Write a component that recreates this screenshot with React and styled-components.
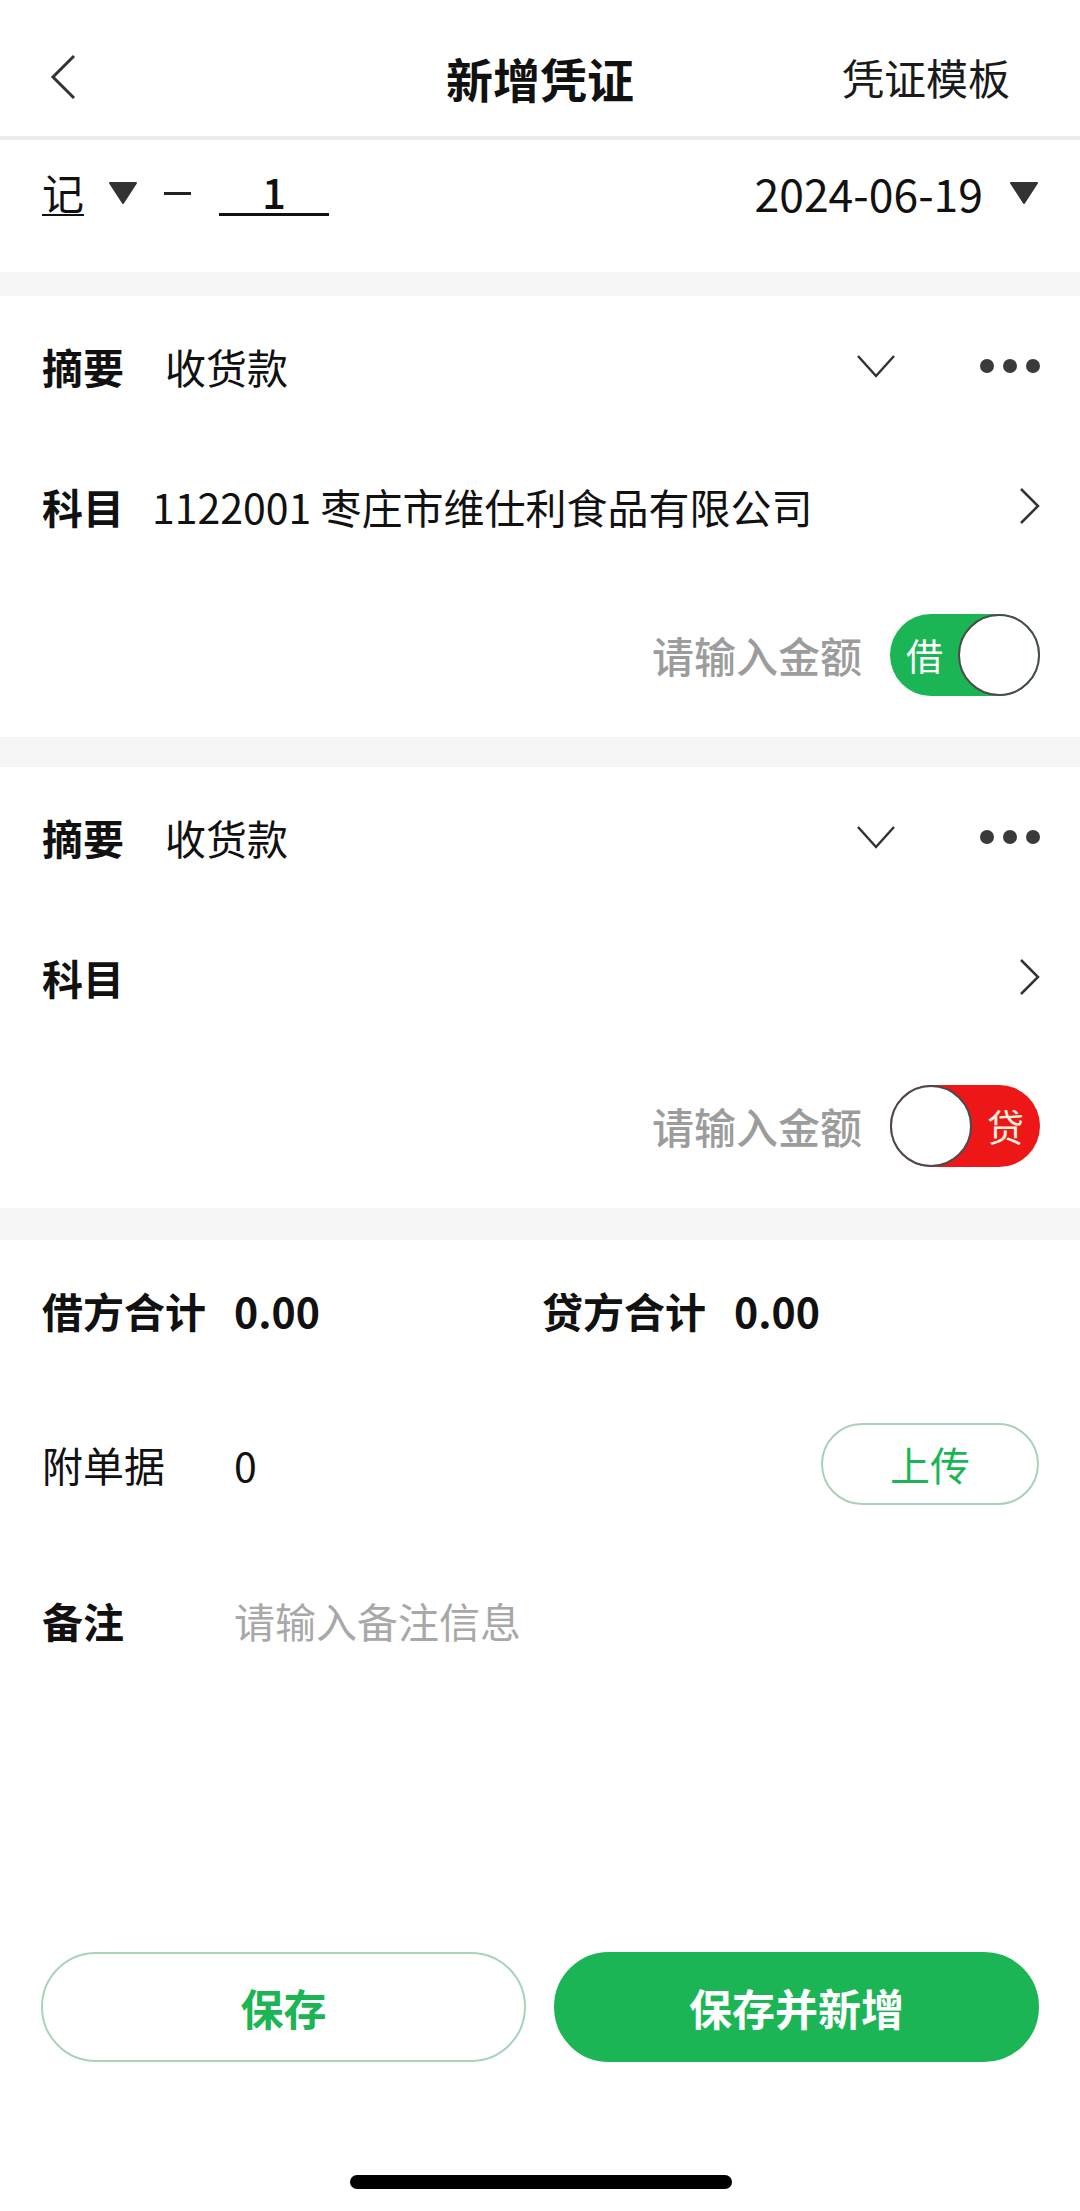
import React from 'react';
import styled, { createGlobalStyle } from 'styled-components';

const GlobalStyle = createGlobalStyle`
  html, body {
    margin: 0;
    padding: 0;
    background: #ffffff;
  }
  body {
    font-family: "Noto Sans CJK SC", "Noto Sans", sans-serif;
    color: #111111;
  }
  * {
    box-sizing: border-box;
  }
`;

const GREEN = '#1bb555';
const RED = '#ee1717';

const Page = styled.div`
  display: flex;
  flex-direction: column;
  width: 1080px;
  min-height: 100vh;
  background: #f5f5f5;
`;

const NavBar = styled.header`
  display: grid;
  grid-template-columns: 1fr auto 1fr;
  align-items: center;
  height: 140px;
  padding: 18px 0 0;
  background: #ffffff;
  border-bottom: 4px solid #ececec;
`;

const BackButton = styled.button`
  justify-self: start;
  display: flex;
  align-items: center;
  margin-left: 50px;
  padding: 0;
  border: none;
  background: none;
`;

const Title = styled.h1`
  margin: 0;
  font-size: 47px;
  font-weight: 700;
  line-height: 1;
  color: #111111;
`;

const NavAction = styled.span`
  justify-self: end;
  margin-right: 70px;
  font-size: 42px;
  line-height: 1;
  color: #1a1a1a;
`;

const VoucherBar = styled.div`
  display: flex;
  align-items: center;
  height: 132px;
  padding: 0 42px 26px;
  background: #ffffff;
`;

const Word = styled.span`
  display: inline-block;
  font-size: 42px;
  line-height: 1;
  padding-bottom: 1px;
  border-bottom: 2px solid #111111;
`;

const Dash = styled.span`
  width: 27px;
  height: 3px;
  margin: 0 28px 0 27px;
  background: #222222;
`;

const NumberField = styled.span`
  display: inline-block;
  width: 110px;
  text-align: center;
  font-size: 42px;
  font-weight: 500;
  line-height: 1;
  padding-bottom: 1px;
  border-bottom: 3px solid #111111;
`;

const DateText = styled.span`
  margin-left: auto;
  margin-right: 27px;
  font-size: 44.5px;
  line-height: 1;
  color: #111111;
`;

const Card = styled.section`
  margin-top: ${(p) => p.$gap}px;
  padding: 0 40px 0 42px;
  background: #ffffff;
`;

const FieldRow = styled.div`
  display: flex;
  align-items: center;
  height: 140px;
`;

const Label = styled.span`
  flex-shrink: 0;
  width: ${(p) => (p.$width ? `${p.$width}px` : 'auto')};
  font-size: 41px;
  font-weight: ${(p) => (p.$plain ? 400 : 700)};
  line-height: 1;
  color: #111111;
`;

const Value = styled.span`
  flex: 1;
  margin-left: ${(p) => p.$gap}px;
  font-size: ${(p) => p.$size || 41}px;
  line-height: 1;
  color: ${(p) => (p.$muted ? '#a8a8a8' : '#111111')};
  white-space: nowrap;
`;

const IconSlot = styled.span`
  display: flex;
  align-items: center;
  margin-left: ${(p) => p.$gap || 0}px;
`;

const Dots = styled.span`
  display: flex;
  gap: 9px;
  margin-left: 85px;
`;

const Dot = styled.span`
  width: 14px;
  height: 14px;
  border-radius: 50%;
  background: #3a3a3a;
`;

const AmountRow = styled.div`
  display: flex;
  align-items: center;
  justify-content: flex-end;
  gap: 28px;
  height: 161px;
  padding-bottom: 3px;
`;

const AmountHint = styled.span`
  font-size: 42px;
  font-weight: 500;
  line-height: 1;
  color: #9c9c9c;
`;

const Toggle = styled.div`
  position: relative;
  display: flex;
  align-items: center;
  justify-content: ${(p) => (p.$debit ? 'flex-start' : 'flex-end')};
  width: 150px;
  height: 82px;
  padding: 0 16px;
  border-radius: 41px;
  background: ${(p) => (p.$debit ? GREEN : RED)};
  color: ${(p) => (p.$debit ? '#ffffff' : '#fff3e0')};
  font-size: 37px;
  line-height: 1;
`;

const Knob = styled.span`
  position: absolute;
  top: 0;
  ${(p) => (p.$debit ? 'right: 0;' : 'left: 0;')}
  width: 82px;
  height: 82px;
  border-radius: 50%;
  background: #ffffff;
  border: 2px solid #4a4a4a;
`;

const Summary = styled.section`
  flex: 1;
  display: flex;
  flex-direction: column;
  margin-top: 32px;
  padding: 0 41px 0 42px;
  background: #ffffff;
`;

const TotalsRow = styled.div`
  display: grid;
  grid-template-columns: 500px 1fr;
  align-items: center;
  height: 146px;
  padding-bottom: 6px;
`;

const Total = styled.div`
  display: flex;
  align-items: center;
`;

const TotalAmount = styled.span`
  margin-left: 28px;
  font-size: 41px;
  font-weight: 700;
  line-height: 1;
`;

const InfoRow = styled.div`
  display: flex;
  align-items: center;
  height: 156px;
`;

const Count = styled.span`
  font-size: 41px;
  line-height: 1;
`;

const UploadButton = styled.button`
  margin-left: auto;
  width: 218px;
  height: 82px;
  border-radius: 41px;
  border: 2px solid #a8d2b6;
  background: #ffffff;
  color: ${GREEN};
  font-family: inherit;
  font-size: 40px;
  line-height: 1;
`;

const ButtonBar = styled.div`
  display: grid;
  grid-template-columns: 1fr 1fr;
  gap: 28px;
  margin-top: auto;
  margin-left: -1px;
`;

const ActionButton = styled.button`
  height: 110px;
  border-radius: 55px;
  border: 2px solid ${(p) => (p.$primary ? GREEN : '#a9d3b9')};
  background: ${(p) => (p.$primary ? GREEN : '#ffffff')};
  color: ${(p) => (p.$primary ? '#ffffff' : GREEN)};
  font-family: inherit;
  font-size: 43px;
  font-weight: 700;
  line-height: 1;
`;

const HomeIndicator = styled.div`
  align-self: center;
  width: 382px;
  height: 14px;
  margin: 113px 0 22px;
  border-radius: 7px;
  background: #000000;
`;

const BackIcon = () => (
  <svg width="26" height="46" viewBox="0 0 26 46">
    <polyline points="24,2 3,23 24,44" fill="none" stroke="#333" strokeWidth="3" />
  </svg>
);

const Caret = () => (
  <svg width="28" height="22" viewBox="0 0 28 22">
    <polygon points="1,1 27,1 14,21" fill="#333" stroke="#333" strokeWidth="2" strokeLinejoin="round" />
  </svg>
);

const ChevronDown = () => (
  <svg width="38" height="23" viewBox="0 0 38 23">
    <polyline points="1,1 19,21 37,1" fill="none" stroke="#333" strokeWidth="2.5" />
  </svg>
);

const ChevronRight = () => (
  <svg width="20" height="36" viewBox="0 0 20 36">
    <polyline points="1,1 18,18 1,35" fill="none" stroke="#333" strokeWidth="2.5" />
  </svg>
);

const entries = [
  { summary: '收货款', subject: '1122001 枣庄市维仕利食品有限公司', debit: true, gap: 24 },
  { summary: '收货款', subject: '', debit: false, gap: 30 },
];

function EntryCard({ summary, subject, debit, gap }) {
  return (
    <Card $gap={gap}>
      <FieldRow>
        <Label>摘要</Label>
        <Value $gap={41}>{summary}</Value>
        <IconSlot>
          <ChevronDown />
        </IconSlot>
        <Dots>
          <Dot />
          <Dot />
          <Dot />
        </Dots>
      </FieldRow>
      <FieldRow>
        <Label>科目</Label>
        <Value $gap={28}>{subject}</Value>
        <IconSlot>
          <ChevronRight />
        </IconSlot>
      </FieldRow>
      <AmountRow>
        <AmountHint>请输入金额</AmountHint>
        <Toggle $debit={debit}>
          {debit ? '借' : '贷'}
          <Knob $debit={debit} />
        </Toggle>
      </AmountRow>
    </Card>
  );
}

export default function App() {
  return (
    <>
      <GlobalStyle />
      <Page>
        <NavBar>
          <BackButton>
            <BackIcon />
          </BackButton>
          <Title>新增凭证</Title>
          <NavAction>凭证模板</NavAction>
        </NavBar>

        <VoucherBar>
          <Word>记</Word>
          <IconSlot $gap={25}>
            <Caret />
          </IconSlot>
          <Dash />
          <NumberField>1</NumberField>
          <DateText>2024-06-19</DateText>
          <Caret />
        </VoucherBar>

        {entries.map((e, i) => (
          <EntryCard key={i} {...e} />
        ))}

        <Summary>
          <TotalsRow>
            <Total>
              <Label>借方合计</Label>
              <TotalAmount>0.00</TotalAmount>
            </Total>
            <Total>
              <Label>贷方合计</Label>
              <TotalAmount>0.00</TotalAmount>
            </Total>
          </TotalsRow>
          <InfoRow>
            <Label $plain $width={192}>附单据</Label>
            <Count>0</Count>
            <UploadButton>上传</UploadButton>
          </InfoRow>
          <InfoRow>
            <Label $width={192}>备注</Label>
            <Value $gap={0} $muted>请输入备注信息</Value>
          </InfoRow>
          <ButtonBar>
            <ActionButton>保存</ActionButton>
            <ActionButton $primary>保存并新增</ActionButton>
          </ButtonBar>
          <HomeIndicator />
        </Summary>
      </Page>
    </>
  );
}
